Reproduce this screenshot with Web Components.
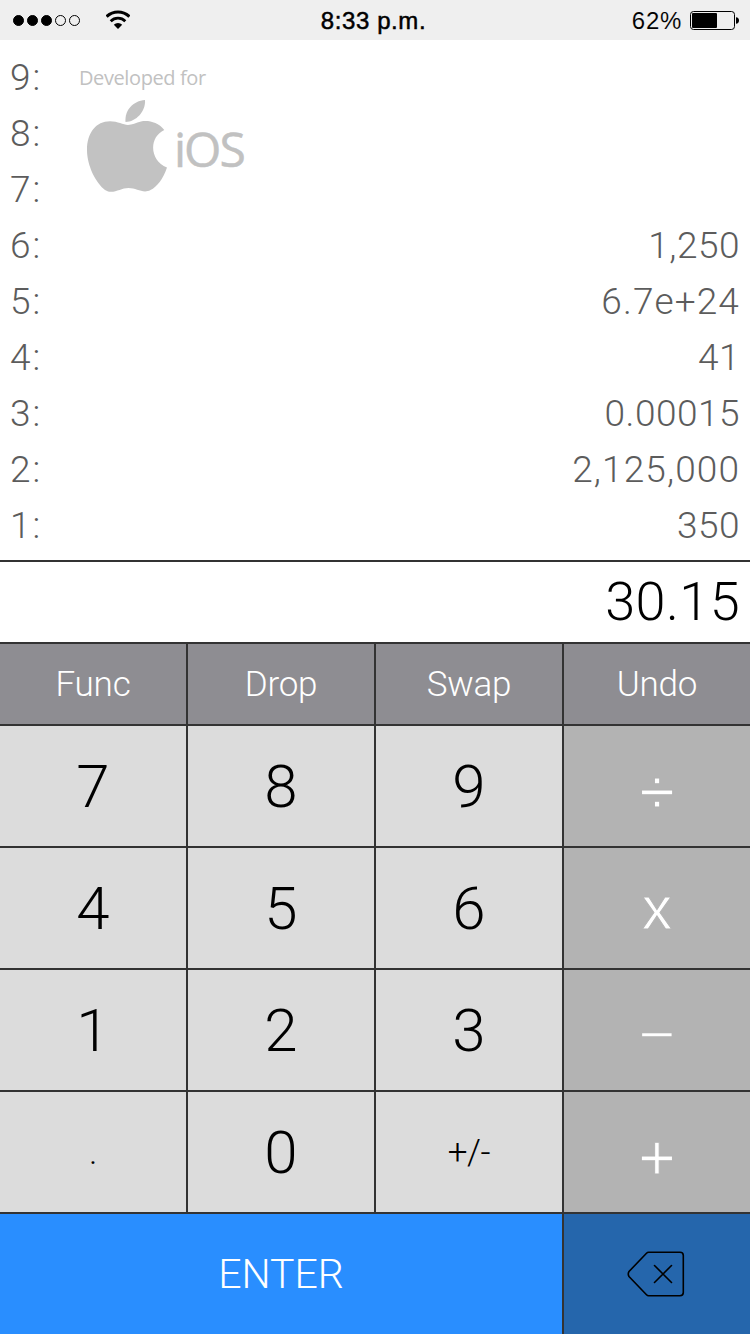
<!DOCTYPE html>
<html lang="en">
<head>
<meta charset="utf-8">
<title>RPN calculator</title>
<style>
    body {
        margin: 0;
        background: #fff;
        font-family: Roboto, "Liberation Sans", sans-serif;
        font-weight: 300;
    }
</style>
</head>
<body>
<calc-app></calc-app>

<script>
customElements.define("status-bar", class extends HTMLElement {
    constructor() {
        super()
        let shadowRoot = this.attachShadow({mode: "open"})
        shadowRoot.innerHTML = `
        <style>
            :host {
                display: grid;
                grid-template-columns: 1fr auto 1fr;
                grid-template-rows: 40px;
                align-items: center;
                height: 40px;
                padding: 0 11px 0 12px;
                box-sizing: border-box;
                background: #efefef;
                color: #000;
                font-family: "Liberation Sans", Arial, sans-serif;
                font-size: 24px;
                line-height: 38px;
            }

            svg {
                display: block;
            }

            .left, .right {
                display: flex;
                align-items: center;
            }

            .left {
                gap: 24px;
            }

            .right {
                justify-content: flex-end;
                gap: 7px;
            }

            .time {
                margin: 2px 4px 0 0;
                letter-spacing: 0.6px;
                -webkit-text-stroke: 0.5px #000;
            }

            .percent {
                margin-top: 2px;
                letter-spacing: 0.7px;
                -webkit-text-stroke: 0.1px #efefef;
            }
        </style>

        <div class="left">
            <svg width="70" height="40" viewBox="0 0 70 40" stroke="#000">
                <circle cx="6.5" cy="20.5" r="5"/>
                <circle cx="20.5" cy="20.5" r="5"/>
                <circle cx="34.5" cy="20.5" r="5"/>
                <circle cx="48.5" cy="20.5" r="5" fill="none"/>
                <circle cx="62.5" cy="20.5" r="5" fill="none"/>
            </svg>
            <svg width="24" height="40" viewBox="0 0 24 40" fill="none" stroke="#000">
                <path d="M0.6 16.6a16.3 16.3 0 0 1 22.8 0" stroke-width="3"/>
                <path d="M4.7 21.2a10.4 10.4 0 0 1 14.6 0" stroke-width="2.8"/>
                <path d="M12 29l-4.2-4.3a6 6 0 0 1 8.4 0z" fill="#000" stroke="none"/>
            </svg>
        </div>
        <div class="time"><slot name="time"></slot></div>
        <div class="right">
            <span class="percent"><slot name="battery"></slot></span>
            <svg width="50" height="40" viewBox="0 0 50 40">
                <rect x="1.5" y="11.5" width="44" height="18" rx="3" fill="none" stroke="#000"/>
                <rect x="3" y="13" width="25" height="15" rx="1"/>
                <path d="M47 17.2q3 .4 3 3.3t-3 3.3z"/>
            </svg>
        </div>
        `
    }
});

customElements.define("stack-row", class extends HTMLElement {
    constructor() {
        super()
        let shadowRoot = this.attachShadow({mode: "open"})
        shadowRoot.innerHTML = `
        <style>
            :host {
                display: flex;
                justify-content: space-between;
                height: 56px;
                padding: 0 10px;
                color: #5c5c5c;
                font-size: 37px;
                line-height: 56px;
                letter-spacing: 0.5px;
            }

            :host([wide]) {
                letter-spacing: 1.1px;
            }

            .level {
                letter-spacing: 2px;
            }
        </style>

        <span class="level">${this.getAttribute("level")}:</span>
        <span><slot></slot></span>
        `
    }
});

customElements.define("ios-badge", class extends HTMLElement {
    constructor() {
        super()
        let shadowRoot = this.attachShadow({mode: "open"})
        shadowRoot.innerHTML = `
        <style>
            :host {
                display: block;
                color: #c1c1c1;
                font-family: "Open Sans", sans-serif;
                font-weight: 400;
            }

            .caption {
                font-size: 20px;
                line-height: 28px;
                letter-spacing: -0.4px;
            }

            .logo {
                display: flex;
                padding: 8px 0 0 8px;
                gap: 5px;
            }

            .name {
                margin-top: 18px;
                font-size: 48px;
                line-height: 62px;
                letter-spacing: -2px;
                -webkit-text-stroke: 0.5px #c1c1c1;
            }
        </style>

        <div class="caption">Developed for</div>
        <div class="logo">
            <svg width="82" height="94" viewBox="0 0 82 94" fill="#c2c2c2">
                <path d="M38.5 22C37.5 10 46 1 58 0C59 11 49 22 38.5 22Z"/>
                <path d="M77.3 30C71 22 61 20 54 21.500C49 22.500 45 25 41 25C36 25 31 21.300 23 21.300C9 21.300 0 33 0 50C0 66 9 83 18 90C26 95 33 88 41.500 88C50 88 56 94 63.500 90C70 87 76 79 80 67.500C62 60 62 37 77.300 30Z"/>
            </svg>
            <div class="name">iOS</div>
        </div>
        `
    }
});

customElements.define("calc-key", class extends HTMLElement {
    constructor() {
        super()
        let shadowRoot = this.attachShadow({mode: "open"})
        // on operators the stroke has the key colour, it thins the sign
        shadowRoot.innerHTML = `
        <style>
            :host {
                --face: #dcdcdc;
                display: flex;
                align-items: center;
                justify-content: center;
                box-sizing: border-box;
                padding-top: 1px;
                background: var(--face);
                color: #000;
                font-size: 60px;
                line-height: 1;
            }

            :host([kind=func]) {
                --face: #8e8d92;
                padding: 0;
                color: #fff;
                font-size: 35px;
                letter-spacing: -0.2px;
            }

            :host([kind=oper]) {
                --face: #b3b3b3;
                color: #fff;
                font-family: "Liberation Sans", Arial, sans-serif;
                font-size: 61px;
                -webkit-text-stroke: 1px var(--face);
            }

            :host([sign]) {
                padding-top: 11px;
                font-size: 64px !important;
            }

            :host([sign=minus]) {
                padding-top: 7px;
                -webkit-text-stroke-width: 1.6px !important;
            }

            :host([kind=small]) {
                font-size: 35px;
                letter-spacing: -0.4px;
            }

            :host([kind=enter]) {
                --face: #298eff;
                grid-column: span 3;
                padding: 0;
                color: #fff;
                font-size: 41px;
            }

            :host([kind=delete]) {
                --face: #2566ac;
                padding: 0 3px 0 0;
            }
        </style>

        <slot></slot>
        `
    }
});

customElements.define("calc-app", class extends HTMLElement {
    constructor() {
        super()
        let shadowRoot = this.attachShadow({mode: "open"})
        shadowRoot.innerHTML = `
        <style>
            :host {
                display: block;
                width: 750px;
            }

            .stack {
                position: relative;
                height: 520px;
                padding-top: 10px;
                box-sizing: border-box;
            }

            ios-badge {
                position: absolute;
                left: 79px;
                top: 24px;
            }

            .entry {
                height: 80px;
                padding-right: 10px;
                border-top: 2px solid #333;
                border-bottom: 2px solid #333;
                font-size: 54px;
                line-height: 80px;
                letter-spacing: 0.4px;
                text-align: right;
            }

            .keys {
                display: grid;
                grid-template-columns: repeat(4, 186px);
                grid-template-rows: 80px repeat(5, 120px);
                gap: 2px;
                background: #333;
            }
        </style>

        <status-bar>
            <span slot="time">8:33 p.m.</span>
            <span slot="battery">62%</span>
        </status-bar>
        <div class="stack">
            <stack-row level="9"></stack-row>
            <stack-row level="8"></stack-row>
            <stack-row level="7"></stack-row>
            <stack-row level="6">1,250</stack-row>
            <stack-row level="5" wide>6.7e+24</stack-row>
            <stack-row level="4">41</stack-row>
            <stack-row level="3">0.00015</stack-row>
            <stack-row level="2" wide>2,125,000</stack-row>
            <stack-row level="1">350</stack-row>
            <ios-badge></ios-badge>
        </div>
        <div class="entry">30.15</div>
        <div class="keys">
            <calc-key kind="func">Func</calc-key>
            <calc-key kind="func">Drop</calc-key>
            <calc-key kind="func">Swap</calc-key>
            <calc-key kind="func">Undo</calc-key>
            <calc-key>7</calc-key>
            <calc-key>8</calc-key>
            <calc-key>9</calc-key>
            <calc-key kind="oper" sign>÷</calc-key>
            <calc-key>4</calc-key>
            <calc-key>5</calc-key>
            <calc-key>6</calc-key>
            <calc-key kind="oper">x</calc-key>
            <calc-key>1</calc-key>
            <calc-key>2</calc-key>
            <calc-key>3</calc-key>
            <calc-key kind="oper" sign="minus">−</calc-key>
            <calc-key kind="small">.</calc-key>
            <calc-key>0</calc-key>
            <calc-key kind="small">+/-</calc-key>
            <calc-key kind="oper" sign>+</calc-key>
            <calc-key kind="enter">ENTER</calc-key>
            <calc-key kind="delete">
                <svg width="58" height="46" viewBox="0 0 58 46" fill="none" stroke="#000" stroke-width="1.6" stroke-linecap="round">
                    <path d="M21.500 1.300H53Q56.300 1.300 56.300 4.500V41.500Q56.300 44.700 53 44.700H21.500Q20.500 44.700 19.500 43.700L2 25.500Q0.500 23 2 20.500L19.500 2.300Q20.500 1.300 21.500 1.300Z"/>
                    <path d="M27.500 14.500l17 17M44.500 14.500l-17 17"/>
                </svg>
            </calc-key>
        </div>
        `
    }
});
</script>
</body>
</html>
